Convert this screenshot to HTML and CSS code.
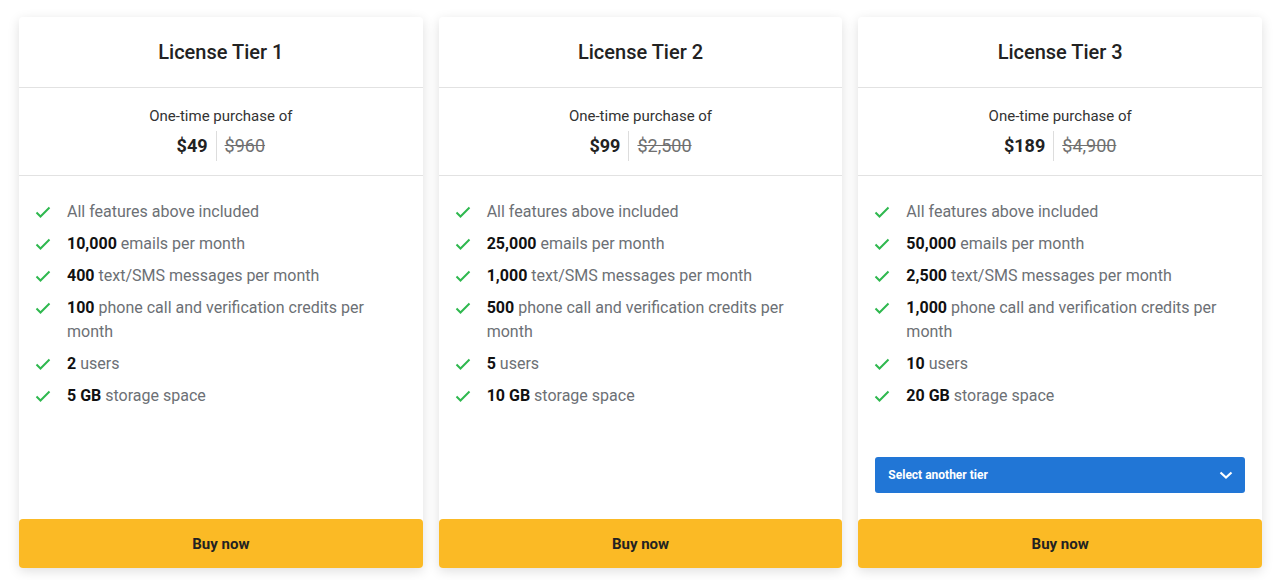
FILE: index.html
```html
<!DOCTYPE html>
<html lang="en">
<head>
  <meta charset="UTF-8">
  <meta name="viewport" content="width=device-width, initial-scale=1.0">
  <title>License Tiers</title>
  <link rel="stylesheet" href="styles.css">
</head>
<body>
  <div class="tiers">

    <!-- tier 1 -->
    <div class="tier">
      <div class="tier-head">License Tier 1</div>
      <div class="tier-price">
        <p class="once">One-time purchase of</p>
        <div class="amount"><span class="now">$49</span><span class="was">$960</span></div>
      </div>
      <div class="tier-body">
        <ul class="features">
          <li><svg class="check" viewBox="0 0 16 16"><path d="M1.5 8.5l4 4 9-9"/></svg><p>All features above included</p></li>
          <li><svg class="check" viewBox="0 0 16 16"><path d="M1.5 8.5l4 4 9-9"/></svg><p><b>10,000</b> emails per month</p></li>
          <li><svg class="check" viewBox="0 0 16 16"><path d="M1.5 8.5l4 4 9-9"/></svg><p><b>400</b> text/SMS messages per month</p></li>
          <li><svg class="check" viewBox="0 0 16 16"><path d="M1.5 8.5l4 4 9-9"/></svg><p><b>100</b> phone call and verification credits per month</p></li>
          <li><svg class="check" viewBox="0 0 16 16"><path d="M1.5 8.5l4 4 9-9"/></svg><p><b>2</b> users</p></li>
          <li><svg class="check" viewBox="0 0 16 16"><path d="M1.5 8.5l4 4 9-9"/></svg><p><b>5 GB</b> storage space</p></li>
        </ul>
      </div>
      <button class="buy">Buy now</button>
    </div>

    <!-- tier 2 -->
    <div class="tier">
      <div class="tier-head">License Tier 2</div>
      <div class="tier-price">
        <p class="once">One-time purchase of</p>
        <div class="amount"><span class="now">$99</span><span class="was">$2,500</span></div>
      </div>
      <div class="tier-body">
        <ul class="features">
          <li><svg class="check" viewBox="0 0 16 16"><path d="M1.5 8.5l4 4 9-9"/></svg><p>All features above included</p></li>
          <li><svg class="check" viewBox="0 0 16 16"><path d="M1.5 8.5l4 4 9-9"/></svg><p><b>25,000</b> emails per month</p></li>
          <li><svg class="check" viewBox="0 0 16 16"><path d="M1.5 8.5l4 4 9-9"/></svg><p><b>1,000</b> text/SMS messages per month</p></li>
          <li><svg class="check" viewBox="0 0 16 16"><path d="M1.5 8.5l4 4 9-9"/></svg><p><b>500</b> phone call and verification credits per month</p></li>
          <li><svg class="check" viewBox="0 0 16 16"><path d="M1.5 8.5l4 4 9-9"/></svg><p><b>5</b> users</p></li>
          <li><svg class="check" viewBox="0 0 16 16"><path d="M1.5 8.5l4 4 9-9"/></svg><p><b>10 GB</b> storage space</p></li>
        </ul>
      </div>
      <button class="buy">Buy now</button>
    </div>

    <!-- tier 3 -->
    <div class="tier">
      <div class="tier-head">License Tier 3</div>
      <div class="tier-price">
        <p class="once">One-time purchase of</p>
        <div class="amount"><span class="now">$189</span><span class="was">$4,900</span></div>
      </div>
      <div class="tier-body">
        <ul class="features">
          <li><svg class="check" viewBox="0 0 16 16"><path d="M1.5 8.5l4 4 9-9"/></svg><p>All features above included</p></li>
          <li><svg class="check" viewBox="0 0 16 16"><path d="M1.5 8.5l4 4 9-9"/></svg><p><b>50,000</b> emails per month</p></li>
          <li><svg class="check" viewBox="0 0 16 16"><path d="M1.5 8.5l4 4 9-9"/></svg><p><b>2,500</b> text/SMS messages per month</p></li>
          <li><svg class="check" viewBox="0 0 16 16"><path d="M1.5 8.5l4 4 9-9"/></svg><p><b>1,000</b> phone call and verification credits per month</p></li>
          <li><svg class="check" viewBox="0 0 16 16"><path d="M1.5 8.5l4 4 9-9"/></svg><p><b>10</b> users</p></li>
          <li><svg class="check" viewBox="0 0 16 16"><path d="M1.5 8.5l4 4 9-9"/></svg><p><b>20 GB</b> storage space</p></li>
        </ul>
        <div class="select">
          <span>Select another tier</span>
          <svg class="chev" viewBox="0 0 14 10"><path d="M1.5 2.5l5.5 5 5.5-5"/></svg>
        </div>
      </div>
      <button class="buy">Buy now</button>
    </div>

  </div>
</body>
</html>
```

FILE: styles.css
```css
* {
  margin: 0;
  padding: 0;
  box-sizing: border-box;
}

body {
  font-family: Roboto, 'Liberation Sans', sans-serif;
  background: #fff;
  color: #222;
}

/* row of cards */
.tiers {
  display: flex;
  gap: 16px;
  padding: 17px 20px 12px 19px;
  height: 580px;
}

.tier {
  flex: 1;
  display: flex;
  flex-direction: column;
  background: #fff;
  border-radius: 4px;
  box-shadow: 0 3px 12px rgba(0, 0, 0, 0.13);
}

.tier-head {
  height: 71px;
  display: flex;
  align-items: center;
  justify-content: center;
  font-size: 20px;
  font-weight: 500;
  color: #222;
  border-bottom: 1px solid #e2e2e2;
}

/* price block */
.tier-price {
  height: 88px;
  padding-top: 17px;
  text-align: center;
  border-bottom: 1px solid #e2e2e2;
}

.once {
  font-size: 15px;
  line-height: 22px;
  color: #333;
}

.amount {
  display: flex;
  justify-content: center;
  align-items: center;
  margin-top: 4px;
  font-size: 18px;
  line-height: 30px;
}

.now {
  font-weight: 700;
  color: #222;
  padding-right: 8px;
  border-right: 1px solid #ddd;
}

.was {
  color: #707070;
  padding-left: 8px;
  text-decoration: line-through;
}

/* features */
.tier-body {
  flex: 1;
  display: flex;
  flex-direction: column;
  padding: 24px 17px 26px 16px;
}

.features {
  list-style: none;
}

.features li {
  display: flex;
  gap: 16px;
  font-size: 16px;
  line-height: 24px;
  color: #6c7075;
  margin-bottom: 8px;
}

.features b {
  font-weight: 700;
  color: #111;
}

.check {
  flex: none;
  width: 16px;
  height: 16px;
  margin-top: 4px;
  fill: none;
  stroke: #2fb84f;
  stroke-width: 2;
}

/* dropdown */
.select {
  margin-top: auto;
  margin-left: 1px;
  height: 36px;
  display: flex;
  align-items: center;
  justify-content: space-between;
  padding: 0 12px 0 13px;
  background: #2176d6;
  border-radius: 3px;
  color: #fff;
  font-size: 12px;
  font-weight: 700;
}

.chev {
  width: 14px;
  height: 10px;
  fill: none;
  stroke: #fff;
  stroke-width: 2.2;
}

/* button */
.buy {
  height: 49px;
  border: none;
  border-radius: 4px;
  background: #fbba25;
  color: #222;
  font-family: inherit;
  font-size: 15px;
  font-weight: 700;
  cursor: pointer;
}
```
